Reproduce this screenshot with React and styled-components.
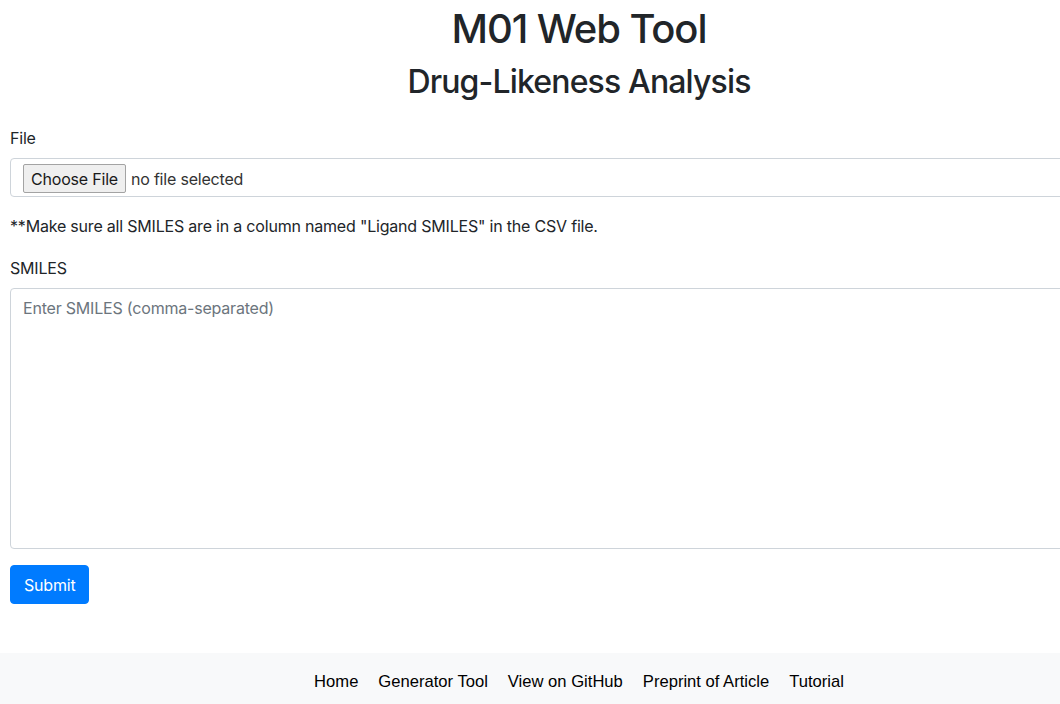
import styled, { createGlobalStyle } from "styled-components";

const GlobalStyle = createGlobalStyle`
  html, body {
    margin: 0;
    padding: 0;
    overflow-x: hidden;
    background: #fff;
  }
  body {
    font-family: Inter, "Liberation Sans", Arial, sans-serif;
    font-size: 16px;
    line-height: 1.5;
    letter-spacing: -0.2px;
    color: #212529;
  }
  * { box-sizing: border-box; }
`;

const Page = styled.div`
  width: 1158px;
  display: flex;
  flex-direction: column;
`;

const Main = styled.main`
  padding: 0 10px;
`;

const Title = styled.h1`
  margin: 5px 0 0;
  text-align: center;
  font-size: 40px;
  font-weight: 500;
  line-height: 1.2;
  letter-spacing: -1.1px;
`;

const Subtitle = styled.h2`
  margin: 10px 0 25px;
  text-align: center;
  font-size: 32px;
  font-weight: 500;
  line-height: 1.2;
  letter-spacing: -0.85px;
`;

const Group = styled.div`
  margin-top: ${(p) => p.$top || 0}px;
  margin-bottom: ${(p) => p.$gap || 0}px;
`;

const Label = styled.label`
  display: block;
  margin-bottom: 8px;
  font-size: 16px;
`;

const FileBox = styled.div`
  display: flex;
  align-items: center;
  height: 39px;
  padding: 2px 12px 0;
  border: 1px solid #ced4da;
  border-radius: 4px;
  background: #fff;
`;

const FileButton = styled.button`
  height: 29px;
  padding: 0 7px;
  font-family: inherit;
  font-size: 16px;
  letter-spacing: -0.2px;
  color: #1a1a1a;
  background: #efefef;
  border: 1px solid #a3a3a3;
  border-radius: 2px;
`;

const FileName = styled.span`
  margin-left: 5px;
  color: #333;
`;

const Help = styled.p`
  margin: 0;
  padding-top: 17px;
`;

const TextArea = styled.textarea`
  display: block;
  width: 100%;
  height: 261px;
  padding: 7px 12px;
  font-family: inherit;
  font-size: 16px;
  line-height: 1.5;
  letter-spacing: -0.2px;
  color: #495057;
  border: 1px solid #ced4da;
  border-radius: 4px;
  resize: none;
  &::placeholder { color: #6c757d; }
`;

const Submit = styled.button`
  height: 39px;
  padding: 0 13px;
  font-family: inherit;
  font-size: 16px;
  letter-spacing: -0.2px;
  color: #fff;
  background: #007bff;
  border: 1px solid #007bff;
  border-radius: 4px;
`;

const Footer = styled.footer`
  margin-top: 49px;
  height: 58px;
  background: #f8f9fa;
  display: flex;
  justify-content: center;
  align-items: center;
  gap: 20px;
`;

const FooterLink = styled.a`
  font-family: "Liberation Sans", Arial, sans-serif;
  font-size: 16.6px;
  letter-spacing: 0;
  color: #000;
  text-decoration: none;
`;

const links = ["Home", "Generator Tool", "View on GitHub", "Preprint of Article", "Tutorial"];

export default function App() {
  return (
    <Page>
      <GlobalStyle />
      <Main>
        <Title>M01 Web Tool</Title>
        <Subtitle>Drug-Likeness Analysis</Subtitle>
        <Group>
          <Label>File</Label>
          <FileBox>
            <FileButton type="button">Choose File</FileButton>
            <FileName>no file selected</FileName>
          </FileBox>
          <Help>**Make sure all SMILES are in a column named "Ligand SMILES" in the CSV file.</Help>
        </Group>
        <Group $top={18} $gap={16}>
          <Label>SMILES</Label>
          <TextArea placeholder="Enter SMILES (comma-separated)" />
        </Group>
        <Submit type="button">Submit</Submit>
      </Main>
      <Footer>
        {links.map((l) => (
          <FooterLink key={l} href="#">{l}</FooterLink>
        ))}
      </Footer>
    </Page>
  );
}
